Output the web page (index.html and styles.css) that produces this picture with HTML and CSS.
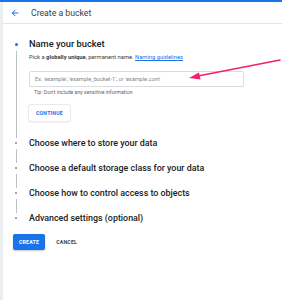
FILE: index.html
```html
<!DOCTYPE html>
<html>
<head>
    <title>Create a bucket</title>
    <meta charset="UTF-8">
    <meta name="viewport" content="width=device-width, initial-scale=1">
    <link rel="stylesheet" href="styles.css">
</head>
<body>
    <div class="topbar"></div>
    <div class="page">
        <div class="rail"></div>
        <div class="main">
            <div class="header">
                <svg class="back" viewBox="0 0 24 24" width="10" height="10">
                    <path d="M20 11H7.83l5.59-5.59L12 4l-8 8 8 8 1.41-1.41L7.83 13H20v-2z" fill="#1a73e8"/>
                </svg>
                <span class="title">Create a bucket</span>
            </div>
            <ul class="steps">
                <li class="step active">
                    <div class="marker"><span class="dot"></span><span class="line"></span></div>
                    <div class="content">
                        <div class="step-head big">Name your bucket</div>
                        <p class="desc">Pick a <b>globally unique</b>, permanent name. <a href="#">Naming guidelines</a></p>
                        <div class="field">Ex. 'example', 'example_bucket-1', or 'example.com'</div>
                        <p class="tip">Tip: Don't include any sensitive information</p>
                        <button class="continue">CONTINUE</button>
                    </div>
                </li>
                <li class="step">
                    <div class="marker"><span class="dot"></span><span class="line"></span></div>
                    <div class="content"><div class="step-head">Choose where to store your data</div></div>
                </li>
                <li class="step">
                    <div class="marker"><span class="dot"></span><span class="line"></span></div>
                    <div class="content"><div class="step-head">Choose a default storage class for your data</div></div>
                </li>
                <li class="step">
                    <div class="marker"><span class="dot"></span><span class="line"></span></div>
                    <div class="content"><div class="step-head">Choose how to control access to objects</div></div>
                </li>
                <li class="step last">
                    <div class="marker"><span class="dot"></span></div>
                    <div class="content"><div class="step-head">Advanced settings (optional)</div></div>
                </li>
            </ul>
            <div class="actions">
                <button class="create">CREATE</button>
                <button class="cancel">CANCEL</button>
            </div>
        </div>
    </div>
    <svg class="pointer" viewBox="0 0 282 300" width="282" height="300">
        <line x1="280" y1="60" x2="198" y2="76" stroke="#f2206e" stroke-width="1.6" stroke-linecap="round"/>
        <polygon points="189,78 199,72.5 200.5,79.5" fill="#f2206e"/>
    </svg>
</body>
</html>
```

FILE: styles.css
```css
body {
    margin: 0;
    background: #fff;
    color: #202124;
    font-family: Roboto, "Liberation Sans", sans-serif;
}
.topbar {
    height: 2px;
    background: #1a73e8;
}
.page {
    display: flex;
    min-height: 298px;
}
.rail {
    width: 3px;
    background: #eceff1;
}
.main {
    flex: 1;
}
.header {
    display: flex;
    align-items: center;
    height: 21px;
    border-bottom: 1px solid #e3e5e8;
}
.back {
    margin-left: 7px;
}
.title {
    margin-left: 11px;
    font-size: 8.7px;
    color: #3c4043;
}
.steps {
    list-style: none;
    margin: 0;
    padding: 14px 0 0;
}
.step {
    display: grid;
    grid-template-columns: 26px 1fr;
}
.marker {
    display: flex;
    flex-direction: column;
    align-items: center;
}
.dot {
    width: 2px;
    height: 2px;
    margin-top: 5px;
    border-radius: 50%;
    background: #80868b;
}
.active .dot {
    width: 3px;
    height: 3px;
    background: #1a73e8;
}
.line {
    flex: 1;
    width: 1px;
    margin: 5px 0 -1px;
    background: #bdc1c6;
}
.content {
    padding-bottom: 13px;
}
.active .content {
    padding-bottom: 16px;
}
.last .content {
    padding-bottom: 0;
}
.step-head {
    height: 12px;
    line-height: 12px;
    font-size: 8.9px;
    font-weight: 500;
}
.step-head.big {
    font-size: 9.3px;
}
.desc {
    margin: 4px 0 0;
    font-size: 5.8px;
    line-height: 6px;
    color: #3c4043;
}
.desc b {
    font-weight: 700;
}
.desc a {
    color: #1a73e8;
}
.field {
    width: 208px;
    height: 14px;
    margin-top: 11px;
    padding-left: 5px;
    border: 1px solid #dadce0;
    border-radius: 2px;
    font-size: 5.6px;
    line-height: 14px;
    color: #80868b;
}
.tip {
    margin: 2px 0 0 5px;
    font-size: 5.2px;
    line-height: 6px;
    color: #5f6368;
}
button {
    font-family: Roboto, "Liberation Sans", sans-serif;
    font-weight: 700;
    font-size: 5.2px;
    letter-spacing: 0.2px;
    border: 0;
    cursor: pointer;
}
.continue {
    height: 16px;
    margin-top: 10px;
    padding: 0 7px;
    background: #fff;
    color: #1a73e8;
    border-radius: 2px;
    box-shadow: 0 0 0 1px #e8eaed, 0 1px 2px rgba(60, 64, 67, 0.2);
}
.actions {
    display: flex;
    align-items: center;
    gap: 5px;
    margin: 10px 0 0 10px;
}
.create {
    height: 16px;
    padding: 0 6px;
    background: #1a73e8;
    color: #fff;
    border-radius: 2px;
    box-shadow: 0 1px 2px rgba(60, 64, 67, 0.3);
}
.cancel {
    height: 16px;
    padding: 0 6px;
    background: none;
    color: #3c4043;
}
.pointer {
    position: absolute;
    top: 0;
    left: 0;
    pointer-events: none;
}
```
